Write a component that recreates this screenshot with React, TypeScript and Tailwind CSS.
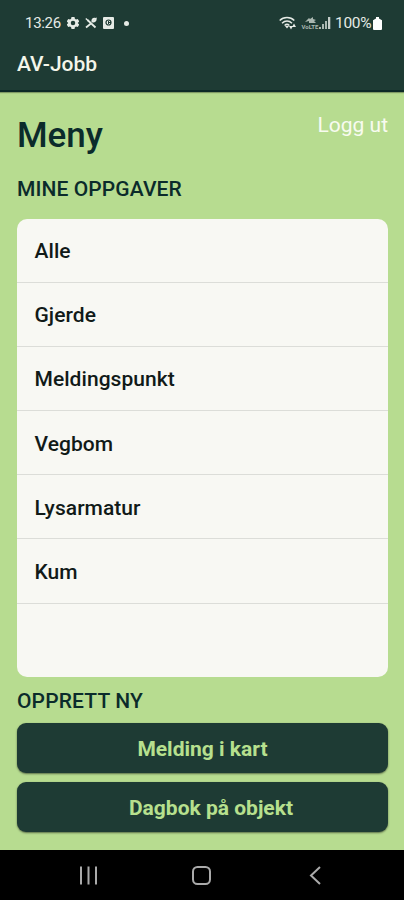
const tasks = ["Alle", "Gjerde", "Meldingspunkt", "Vegbom", "Lysarmatur", "Kum"];

function StatusBar() {
  return (
    <div className="flex h-[46px] items-center justify-between pr-[22px] pl-[25px] text-[#e6ebe6]">
      <div className="flex items-center">
        <span className="w-[37px] text-[15px] tracking-[-0.3px] whitespace-nowrap">13:26</span>
        {/* Settings */}
        <svg className="ml-[5px]" width="12" height="12" viewBox="0 0 24 24" fill="currentColor">
          <path
            fillRule="evenodd"
            d="M9 0h6l.8 3.6 2.2 1.3 3.5-1.1 3 5.2-2.7 2.5v1l2.7 2.5-3 5.2-3.5-1.1-2.2 1.3L15 24H9l-.8-3.6L6 19.1l-3.5 1.1-3-5.2 2.7-2.5v-1L-.5 9l3-5.2L6 4.900l2.200-1.300zM12 7.500a4.500 4.500 0 1 0 0 9 4.500 4.500 0 0 0 0-9z"
          />
        </svg>
        {/* Tools */}
        <svg
          className="ml-[6px]"
          width="12"
          height="12"
          viewBox="0 0 12 12"
          fill="none"
          stroke="currentColor"
          strokeWidth="1.8"
        >
          <path d="M1 10.500 6 6.500M2.500 3l8 7.500" />
          <path d="M.8 1.500 3.500 4M11 2 9 4 7.800 3 9.600 1.500C8 1.300 6.800 2.600 7.200 4.500c1.800.8 3.800 0 3.800-2.500z" strokeWidth="1.400" />
        </svg>
        {/* Vault */}
        <svg className="ml-[6px]" width="11" height="12" viewBox="0 0 11 12">
          <rect width="11" height="12" rx="1" fill="currentColor" />
          <circle cx="5.500" cy="5.500" r="2.500" fill="none" stroke="#1e3b34" strokeWidth="1.200" />
          <path d="M5.500 4v3M5.500 5.500H8" stroke="#1e3b34" />
        </svg>
        <span className="ml-[10px] size-[5px] rounded-full bg-current" />
      </div>
      <div className="flex items-center">
        {/* Wi-Fi */}
        <svg width="18" height="14" viewBox="0 0 18 14" fill="none" stroke="currentColor" strokeWidth="1.500">
          <path d="M.7 4.500C4.500.5 11.500.5 15.300 4.500M3 7.200c3-2.800 7-2.800 10 0M5.600 9.500c1.500-1.400 3.300-1.400 4.800 0" />
          <path d="M6 10h4l-2 2.500z" fill="currentColor" stroke="none" />
          <path d="M10 10h4l-2 3.500zM13 11l2-3.500 2 3.500z" fill="currentColor" stroke="none" />
        </svg>
        <span className="ml-[4px] flex w-[18px] flex-col items-center text-[#aab8b1]">
          <svg width="11" height="7" viewBox="0 0 11 7" fill="currentColor">
            <path d="M0 5 4 1l1 1 3-2v2l3 1-2 1 2 2H4V4z" />
          </svg>
          <span className="text-[6px] leading-[6px] font-bold">VoLTE</span>
        </span>
        {/* Signal */}
        <svg width="12" height="12" viewBox="0 0 12 12" fill="currentColor">
          <path d="M0 10h2v2H0zM3 7h2v5H3zM6 4h2v8H6z" fill="#aab8b1" />
          <path d="M9 0h2.300v12H9z" fill="#c5cec9" />
        </svg>
        <span className="ml-[4px] w-[38px] pt-px text-[15.500px] tracking-[-0.3px] whitespace-nowrap">100%</span>
        {/* Battery */}
        <svg width="9" height="13" viewBox="0 0 9 13" fill="#fff">
          <path d="M3 0h3v1.500l3 1.700V12a1 1 0 0 1-1 1H1a1 1 0 0 1-1-1V3.200l3-1.700z" />
        </svg>
      </div>
    </div>
  );
}

function NavigationBar() {
  return (
    <nav className="flex h-[50px] items-center bg-black text-[#aaa]">
      <svg width="404" height="50" viewBox="0 0 404 50" fill="none" stroke="currentColor" strokeWidth="2">
        <path d="M81 16.500v18M88.500 16.500v18M96 16.500v18" />
        <rect x="193" y="17" width="17" height="17" rx="4.500" />
        <path d="M320 17l-9 8.500 9 8.500" />
      </svg>
    </nav>
  );
}

export default function App() {
  return (
    <div className="flex h-[900px] w-[404px] flex-col bg-[#b7dc90] font-[Roboto,sans-serif] text-[#0b2b2b]">
      <header className="h-[92px] border-b-2 border-[#0d2a27] bg-[#1e3b34] shadow-[0_1px_1px_rgba(0,0,0,0.3)]">
        <StatusBar />
        <h1 className="pt-[4px] pl-[17px] text-[21px] leading-7 font-medium text-[#f4f6ea]">AV-Jobb</h1>
      </header>

      <main className="flex flex-1 flex-col pr-[16px] pl-[17px]">
        <div className="flex h-[84px] items-start justify-between">
          <h2 className="pt-[23px] text-[35px] leading-[42px] font-medium">Meny</h2>
          <a className="pt-[19px] text-[21px] leading-7 text-[#f8fbf0]">Logg ut</a>
        </div>
        <h3 className="pt-px text-[21px] leading-6 font-medium tracking-[0.1px]">MINE OPPGAVER</h3>

        <ul className="mt-[18px] h-[458px] rounded-[10px] bg-[#f8f8f3] text-[#111a18]">
          {tasks.map((task) => (
            <li
              key={task}
              className="flex h-[64.100px] items-center border-b border-[#dcddd8] pt-[3px] pl-[17.500px] text-[21px] font-medium tracking-[0.05px]"
            >
              {task}
            </li>
          ))}
        </ul>

        <h3 className="mt-[12px] text-[21px] leading-6 font-medium tracking-[0.15px]">OPPRETT NY</h3>
        <div className="mt-[10px] flex flex-col gap-[9px]">
          <button className="h-[50px] rounded-[9px] bg-[#1e3b34] pt-[4px] text-[21px] font-bold text-[#b7e08e] shadow-[0_1px_2px_rgba(0,0,0,0.5)]">
            Melding i kart
          </button>
          <button className="h-[50px] rounded-[9px] bg-[#1e3b34] pt-[4px] pl-[17px] text-[21px] font-bold text-[#b7e08e] shadow-[0_1px_2px_rgba(0,0,0,0.5)]">
            Dagbok på objekt
          </button>
        </div>
      </main>

      <NavigationBar />
    </div>
  );
}
